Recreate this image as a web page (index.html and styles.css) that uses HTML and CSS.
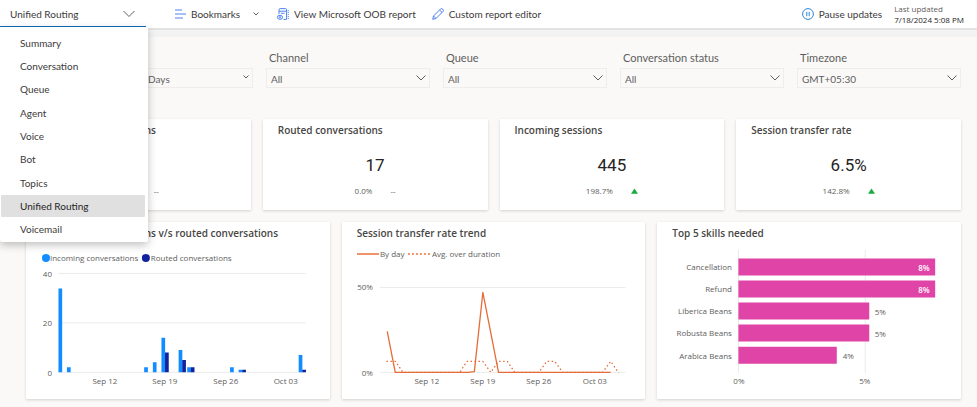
FILE: index.html
```html
<!DOCTYPE html>
<html lang="en">
<head>
<meta charset="utf-8">
<title>Unified Routing</title>
<link rel="stylesheet" href="styles.css">
</head>
<body>
<header class="topbar">
  <div class="picker">
    <button class="picker-button" type="button" aria-expanded="true" aria-controls="report-menu">Unified Routing
      <svg class="chevron-lg" viewBox="0 0 12 8"><path d="M.5 1 6 6.500 11.500 1"/></svg>
    </button>
    <nav class="menu" id="report-menu">
      <a href="#">Summary</a>
      <a href="#">Conversation</a>
      <a href="#">Queue</a>
      <a href="#">Agent</a>
      <a href="#">Voice</a>
      <a href="#">Bot</a>
      <a href="#">Topics</a>
      <a href="#" class="selected" aria-current="page">Unified Routing</a>
      <a href="#">Voicemail</a>
    </nav>
  </div>
  <div class="commands">
    <button type="button" class="command bookmarks">
      <svg class="icon" viewBox="0 0 12 12"><path d="M1 2h7M1 6h11M1 10h8"/></svg>
      Bookmarks
      <svg class="chevron-sm" viewBox="0 0 6 4"><path d="M.5.5 3 3 5.500.5"/></svg>
    </button>
    <button type="button" class="command">
      <svg class="icon" viewBox="0 0 12 12"><path d="M2 6V1.800Q2 .6 3.200.6H8.500Q9.600.6 9.600 1.800V11.400H6.500M2 3.200H9.600M4 5.300H7.500"/><path d="M11.300 2V11" stroke-dasharray="1 1"/><ellipse cx="3" cy="9.300" rx="2.600" ry="2"/><circle cx="3" cy="9.300" r=".7"/></svg>
      View Microsoft OOB report
    </button>
    <button type="button" class="command">
      <svg class="icon" viewBox="0 0 12 12"><path d="M.7 11.300 1.500 8 8.600.9Q9.700.2 10.800 1.200 11.800 2.300 11.100 3.400L4 10.500ZM7.600 2 10 4.400M1.500 8 4 10.500"/></svg>
      Custom report editor
    </button>
  </div>
  <button type="button" class="command pause">
    <svg class="icon" viewBox="0 0 12 12"><circle cx="6" cy="6" r="5.400"/><path d="M4.800 3.800v4.400M7.200 3.800v4.400"/></svg>
    Pause updates
  </button>
  <p class="updated">Last updated<br><span>7/18/2024 5:08 PM</span></p>
</header>

<main>
  <form class="filters">
    <div class="filter duration">
      <label for="duration">Duration</label>
      <span class="select-box"><select id="duration"><option>Days</option></select><svg class="chevron-sm" viewBox="0 0 6 4"><path d="M.5.5 3 3 5.500.5"/></svg></span>
    </div>
    <div class="filter">
      <label for="channel">Channel</label>
      <span class="select-box"><select id="channel"><option>All</option></select><svg class="chevron" viewBox="0 0 10 6"><path d="M.5.5 5 5 9.500.5"/></svg></span>
    </div>
    <div class="filter">
      <label for="queue">Queue</label>
      <span class="select-box"><select id="queue"><option>All</option></select><svg class="chevron" viewBox="0 0 10 6"><path d="M.5.5 5 5 9.500.5"/></svg></span>
    </div>
    <div class="filter">
      <label for="status">Conversation status</label>
      <span class="select-box"><select id="status"><option>All</option></select><svg class="chevron" viewBox="0 0 10 6"><path d="M.5.5 5 5 9.500.5"/></svg></span>
    </div>
    <div class="filter">
      <label for="timezone">Timezone</label>
      <span class="select-box"><select id="timezone"><option>GMT+05:30</option></select><svg class="chevron" viewBox="0 0 10 6"><path d="M.5.5 5 5 9.500.5"/></svg></span>
    </div>
  </form>

  <section class="kpis">
    <article class="card kpi"><h2>Incoming conversations</h2><p class="value">17</p><p class="delta"><span>0.0%</span><span>--</span></p></article>
    <article class="card kpi"><h2>Routed conversations</h2><p class="value">17</p><p class="delta"><span>0.0%</span><span>--</span></p></article>
    <article class="card kpi"><h2>Incoming sessions</h2><p class="value">445</p><p class="delta"><span>198.7%</span><svg class="up" viewBox="0 0 8 6"><path d="M4 0 8 6H0z"/></svg></p></article>
    <article class="card kpi"><h2>Session transfer rate</h2><p class="value">6.5%</p><p class="delta"><span>142.8%</span><svg class="up" viewBox="0 0 8 6"><path d="M4 0 8 6H0z"/></svg></p></article>
  </section>

  <section class="charts">
    <article class="card">
      <h2>Incoming conversations v/s routed conversations</h2>
      <svg class="chart" viewBox="0 0 304 157">
        <circle class="incoming" cx="20" cy="16" r="4"/><text x="24" y="19">Incoming conversations</text>
        <circle class="routed" cx="120" cy="16" r="4"/><text x="125" y="19">Routed conversations</text>
        <path class="grid" d="M32 31.500H280M32 81H280M32 130.500H280"/>
        <g class="end"><text x="26" y="35">40</text><text x="26" y="84">20</text><text x="26" y="134">0</text></g>
        <path class="incoming" d="M32.500 130.500v-84h3.700v84zM41 130.500v-5h3.700v5zM118.300 130.500v-5h3.700v5zM127 130.500v-10h3.700v10zM135.600 130.500v-34.700h3.700v34.700zM152.800 130.500v-22.300h3.700v22.300zM161.400 130.500v-5h3.700v5zM204.300 130.500v-5h3.700v5zM212.900 130.500v-2.500h3.700v2.500zM273 130.500v-17.300h3.700v17.300z"/>
        <path class="routed" d="M139.200 130.500v-19.800h3.700v19.800zM156.400 130.500v-12.400h3.700v12.400zM165 130.500v-5h3.700v5zM216.500 130.500v-2.500h3.700v2.500zM276.600 130.500v-2.500h3.700v2.500z"/>
        <g class="mid"><text x="79" y="142">Sep 12</text><text x="139" y="142">Sep 19</text><text x="200" y="142">Sep 26</text><text x="260" y="142">Oct 03</text></g>
      </svg>
    </article>
    <article class="card">
      <h2>Session transfer rate trend</h2>
      <svg class="chart" viewBox="0 0 304 157">
        <path class="key" d="M15 12H37"/><text x="38" y="15">By day</text>
        <path class="key" d="M66 12H89" stroke-dasharray="2 2"/><text x="90" y="15">Avg. over duration</text>
        <path class="grid" d="M38 45.500H284M38 130.500H284"/>
        <g class="end"><text x="31" y="48">50%</text><text x="31" y="134">0%</text></g>
        <path class="trend" d="M45.300 89.500 53.300 130.500H126L132.500 129.800 141 50.500 156.700 130.500H269"/>
        <path class="trend average" d="M44.500 119.500H53.500L61 130.500H118L125 119.500H141L149 130.500 156.700 119.500H165.500L173 130.500H197L205 119.500H213L221 130.500H261L269 119.500 277 131"/>
        <g class="mid"><text x="85" y="142">Sep 12</text><text x="141" y="142">Sep 19</text><text x="197" y="142">Sep 26</text><text x="253" y="142">Oct 03</text></g>
      </svg>
    </article>
    <article class="card">
      <h2>Top 5 skills needed</h2>
      <svg class="chart" viewBox="0 0 304 157">
        <path class="grid" d="M81.500 7.500V131M208.500 7.500V131"/>
        <path class="skill" d="M81.500 16.500h197v17h-197zM81.500 38.500h197v17h-197zM81.500 60.500h131v17h-131zM81.500 82.500h131v17h-131zM81.500 105h98.500v17h-98.500z"/>
        <g class="end"><text x="75" y="28">Cancellation</text><text x="75" y="50">Refund</text><text x="75" y="72">Liberica Beans</text><text x="75" y="94">Robusta Beans</text><text x="75" y="117">Arabica Beans</text></g>
        <g class="end inside"><text x="273" y="29">8%</text><text x="273" y="51">8%</text></g>
        <text x="218" y="73">5%</text><text x="218" y="95">5%</text><text x="186" y="117">4%</text>
        <g class="mid"><text x="82" y="142">0%</text><text x="208" y="142">5%</text></g>
      </svg>
    </article>
  </section>
</main>
</body>
</html>
```
FILE: styles.css
```css
* { box-sizing: border-box; }
body {
  margin: 0;
  background: #faf9f8;
  color: #3b3a39;
  font: 10px/14px Lato, "Open Sans", sans-serif;
}
h2, p { margin: 0; }
button, select { font: inherit; color: inherit; }
button { border: 0; background: none; padding: 0; }
svg { display: block; fill: none; stroke: #605e5c; flex: none; }

.topbar {
  display: flex;
  align-items: center;
  height: 30px;
  padding-right: 13px;
  background: #fff;
  border-bottom: 2px solid #e3e3e3;
}
.picker { position: relative; align-self: flex-start; width: 146px; }
.picker-button {
  display: flex;
  align-items: center;
  justify-content: space-between;
  width: 100%;
  height: 27px;
  padding: 1px 11px 0 10px;
  border-bottom: 1px solid #0f6cbd;
}
.chevron-lg { width: 12px; height: 8px; }
.chevron { width: 10px; height: 6px; }
.chevron-sm { width: 6px; height: 4px; }
.menu {
  position: absolute;
  z-index: 2;
  top: 27px;
  left: 0;
  display: grid;
  grid-auto-rows: 1fr;
  gap: 2px;
  width: 148px;
  height: 215px;
  padding: 5px 3px 2px 1px;
  background: #fff;
  border-radius: 0 0 2px 2px;
  box-shadow: 0 3px 8px rgba(0, 0, 0, .25);
}
.menu a {
  display: flex;
  align-items: center;
  padding-left: 19px;
  border-radius: 1px;
  color: inherit;
  text-decoration: none;
}
.menu .selected { background: #e0e0e0; color: #242424; }
.commands { display: flex; gap: 16px; flex: 1; padding-left: 28px; }
.command { display: flex; align-items: center; gap: 5px; white-space: nowrap; }
.bookmarks .chevron-sm { margin-left: 8px; }
.bookmarks { margin-right: 2px; }
.icon { width: 12px; height: 12px; stroke: #4f83ee; }
.pause .icon { stroke: #2b88d8; }
.updated { margin-left: 12px; font: 8px/11px "Open Sans", sans-serif; color: #605e5c; white-space: nowrap; }
.updated span { color: #242424; }

main { padding: 15px 16px 8px 26px; border-top: 7px solid #f3f3f3; }
.filters {
  display: grid;
  grid-template-columns: 227fr 164fr 164fr 164fr 164fr;
  gap: 13px;
  margin-bottom: 31px;
}
.filter { color: #605e5c; }
.filter label { display: block; padding-left: 3px; margin-bottom: 5px; line-height: 11px; font-size: 11px; white-space: nowrap; }
.duration { padding-left: 117px; }
.duration label { visibility: hidden; }
.select-box { position: relative; display: block; }
.select-box svg { position: absolute; right: 4px; top: 7px; pointer-events: none; }
select {
  display: block;
  appearance: none;
  width: 100%;
  height: 20px;
  padding: 1px 4px 0;
  border: 1px solid #eeedec;
  border-radius: 0;
  background: transparent;
}

.card { background: #fff; border-radius: 1px; box-shadow: 0 1px 3px rgba(0, 0, 0, .16); }
.card h2 { padding: 4px 15px 2px; font: 600 10px/14px "Open Sans", sans-serif; color: #484644; white-space: nowrap; }
.kpis { display: grid; grid-template-columns: repeat(4, 1fr); gap: 12px; margin-bottom: 12px; }
.kpi { height: 91px; }
.value { margin-top: 16px; font: 17px/20px Roboto, sans-serif; text-align: center; color: #252423; }
.delta { display: flex; align-items: center; justify-content: center; gap: 18px; margin-top: 10px; font: 8px/12px "Open Sans", sans-serif; color: #605e5c; }
.up { width: 7px; height: 6px; fill: #1aab40; stroke: none; }

.charts { display: grid; grid-template-columns: repeat(3, 1fr); gap: 12px; }
.chart { width: 100%; height: auto; }
.chart text { fill: #605e5c; stroke: none; font: 8px "Open Sans", sans-serif; }
.chart .end { text-anchor: end; }
.chart .mid { text-anchor: middle; }
.chart .inside text { fill: #fff; font-weight: 600; }
.chart .incoming { fill: #118dff; stroke: none; }
.chart .routed { fill: #12239e; stroke: none; }
.chart .skill { fill: #e044a7; stroke: none; }
.grid { stroke: #ebebeb; }
.key { stroke: #f0936b; stroke-width: 2; }
.trend { stroke: #e66c37; stroke-width: 1.300; stroke-linejoin: round; }
.average { stroke-dasharray: 1.500 2.500; }
```
